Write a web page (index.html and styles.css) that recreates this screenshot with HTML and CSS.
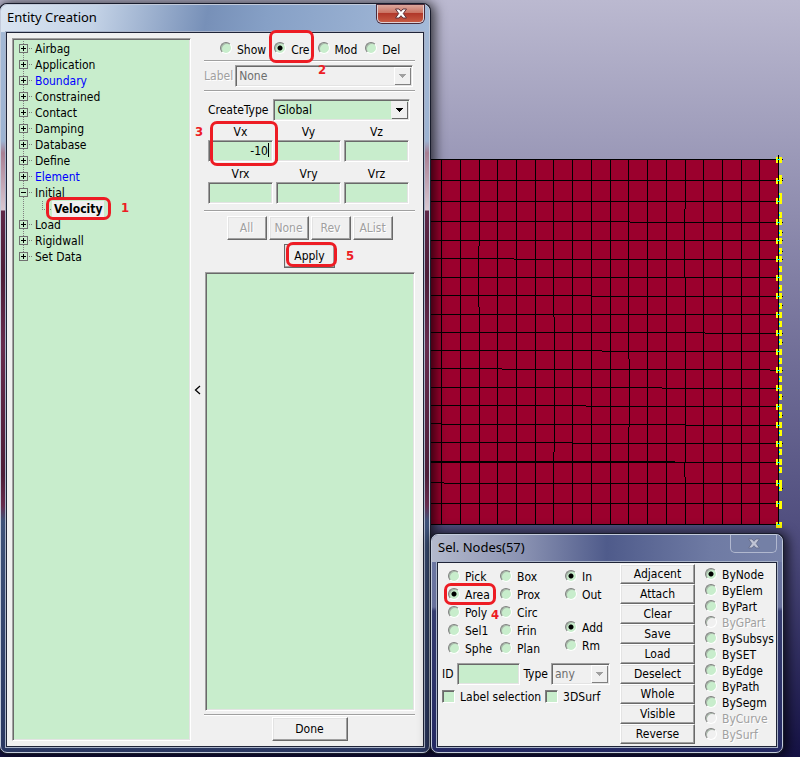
FILE: index.html
```html
<!DOCTYPE html>
<html lang="en">
<head>
<meta charset="utf-8">
<title>Entity Creation</title>
<link rel="stylesheet" href="styles.css">
</head>
<body>
<main class="desktop">
  <svg class="mesh" width="353" height="374" viewBox="431 155 353 374" shape-rendering="crispEdges" aria-hidden="true">
    <rect x="431" y="159" width="348" height="366" fill="#9b002d"/>
    <path fill="none" stroke="#000" stroke-width="1" d="M431 159.500H779M431 180.500H779M431 201.500H779M431 221.500H630M630 222.500H779M431 240.500H779M431 258.500H514M514 259.500H779M431 277.500H779M431 295.500H592M592 296.500H779M431 314.500H779M431 332.500H705M705 333.500H779M431 350.500H602M602 351.500H779M431 368.500H502M502 369.500H770M770 370.500H779M431 387.500H662M662 388.500H779M431 405.500H586M586 406.500H779M431 423.500H441M441 424.500H685M685 425.500H779M431 442.500H572M572 443.500H779M431 461.500H675M431 462.500H779M431 482.500H444M444 483.500H779M431 503.500H779M431 524.500H779"/>
    <path fill="none" stroke="#000" stroke-width="1" d="M441.500 159V525M460.500 159V525M479.500 159V246M478.500 246V307M479.500 307V525M497.500 159V525M516.500 159V525M535.500 159V525M553.500 159V317M554.500 317V452M553.500 452V525M572.500 159V525M591.500 159V525M610.500 159V525M628.500 159V359M629.500 359V427M628.500 427V525M647.500 159V525M666.500 159V525M685.500 159V209M684.500 209V277M685.500 277V462M684.500 462V477M685.500 477V525M703.500 159V525M722.500 159V525M741.500 159V525M759.500 159V525"/>
    <path fill="none" stroke="#ff0" stroke-width="3" d="M780.500 175v6M780.500 193v6M780.500 212v6M780.500 230v6M780.500 248v6M780.500 266v6M780.500 285v6M780.500 303v6M780.500 321v6M780.500 339v6M780.500 358v6M780.500 376v6M780.500 394v6M780.500 412v6M780.500 430v6M780.500 449v6M780.500 467v6M780.500 485v6M780.500 503v6"/>
    <path fill="none" stroke="#ff0" stroke-width="6" d="M779 157v6M779 178v6M779 198v6M779 219v6M779 238v6M779 256v6M779 275v6M779 293v6M779 312v6M779 330v6M779 349v6M779 367v6M779 385v6M779 404v6M779 422v6M779 441v6M779 459v6M779 480v6M779 501v6M779 522v6"/>
    <path fill="none" stroke="#000" stroke-width="1" d="M778.500 155V525M782 159.500h1M782 178.500h1M782 180.500h1M782 222.500h1M782 232.500h1M782 240.500h1M782 251.500h1M782 259.500h1M782 296.500h1M782 305.500h1M782 333.500h1M782 342.500h1M782 370.500h1M782 396.500h1M782 415.500h1M782 443.500h1M782 488.500h1"/>
    <path fill="none" stroke="#0ff" stroke-width="1" d="M779.500 195v3M779.500 214v2M779.500 232v2M779.500 250v2M779.500 268v2M779.500 287v2M779.500 305v2M779.500 323v2M779.500 341v2M779.500 360v2M779.500 378v2M779.500 396v2M779.500 414v2M779.500 432v2M779.500 451v2M779.500 469v2M779.500 487v2"/>
    <path fill="none" stroke="#0ff" stroke-width="1" d="M777 159.500h3M777 180.500h3M777 201.500h3M777 222.500h3M777 240.500h3M777 259.500h3M777 277.500h3M777 296.500h3M777 314.500h3M777 333.500h3M777 351.500h3M777 370.500h3M777 388.500h3M777 406.500h3M777 425.500h3M777 443.500h3M777 462.500h3M777 483.500h3M777 503.500h3M777 524.500h3"/>
  </svg>

  <section class="window entity" aria-labelledby="entity-title">
    <header class="titlebar">
      <h1 class="title" id="entity-title">Entity Creation</h1>
      <button class="close close-red" type="button" aria-label="Close">
        <svg width="14" height="11" viewBox="0 0 14 11"><path d="M1.500 1H5L7 3.300L9 1H12.500L9.300 5.500L12.500 10H9L7 7.700L5 10H1.500L4.700 5.500Z" fill="#fff" stroke="#5c3038" stroke-width="1"/></svg>
      </button>
    </header>
    <div class="client entity-client">
      <ul class="tree">
        <li class="node">Airbag</li>
        <li class="node">Application</li>
        <li class="node blue">Boundary</li>
        <li class="node">Constrained</li>
        <li class="node">Contact</li>
        <li class="node">Damping</li>
        <li class="node">Database</li>
        <li class="node">Define</li>
        <li class="node blue">Element</li>
        <li class="node open">Initial
          <ul class="subtree"><li class="leaf"><span class="selected">Velocity</span></li></ul>
        </li>
        <li class="node">Load</li>
        <li class="node">Rigidwall</li>
        <li class="node last">Set Data</li>
      </ul>
      <button class="collapse" type="button" aria-label="Collapse tree"><svg width="7" height="10" viewBox="0 0 7 10"><path d="M6 1L1.500 5L6 9" fill="none" stroke="#000" stroke-width="1.300"/></svg></button>
      <form class="panel">
        <div class="modes">
          <label class="opt"><input type="radio" name="mode">Show</label>
          <label class="opt"><input type="radio" name="mode" checked>Cre</label>
          <label class="opt"><input type="radio" name="mode">Mod</label>
          <label class="opt"><input type="radio" name="mode">Del</label>
        </div>
        <div class="rule"></div>
        <div class="label-row">
          <label class="off" for="label">Label</label>
          <select id="label" class="grow" disabled><option>None</option></select>
        </div>
        <div class="rule"></div>
        <div class="type-row">
          <label for="ctype">CreateType</label>
          <select id="ctype" class="grow"><option>Global</option></select>
        </div>
        <div class="vectors">
          <label class="vector">Vx<input type="text" value="-10"></label>
          <label class="vector">Vy<input type="text"></label>
          <label class="vector">Vz<input type="text"></label>
          <label class="vector">Vrx<input type="text"></label>
          <label class="vector">Vry<input type="text"></label>
          <label class="vector">Vrz<input type="text"></label>
        </div>
        <div class="rule"></div>
        <div class="picks">
          <button type="button" class="btn" disabled>All</button>
          <button type="button" class="btn" disabled>None</button>
          <button type="button" class="btn" disabled>Rev</button>
          <button type="button" class="btn" disabled>AList</button>
        </div>
        <button type="button" class="btn apply">Apply</button>
        <div class="list"></div>
        <div class="rule"></div>
        <button type="button" class="btn done">Done</button>
      </form>
    </div>
    <span class="caret"></span>
    <span class="ring ring-velocity"></span><b class="step step-1">1</b>
    <span class="ring ring-cre"></span><b class="step step-2">2</b>
    <span class="ring ring-vx"></span><b class="step step-3">3</b>
    <span class="ring ring-apply"></span><b class="step step-5">5</b>
  </section>

  <section class="window nodes" aria-labelledby="nodes-title">
    <header class="titlebar">
      <h2 class="title" id="nodes-title">Sel. Nodes(57)</h2>
      <button class="close close-dim" type="button" aria-label="Close">
        <svg width="14" height="11" viewBox="0 0 14 11"><path d="M1.500 1H5L7 3.300L9 1H12.500L9.300 5.500L12.500 10H9L7 7.700L5 10H1.500L4.700 5.500Z" fill="#c0c4d4" stroke="#69718f" stroke-width="1"/></svg>
      </button>
    </header>
    <form class="client nodes-client">
      <div class="pick-side">
        <div class="pick-cols">
          <div class="stack">
            <label class="opt"><input type="radio" name="shape">Pick</label>
            <label class="opt"><input type="radio" name="shape" checked>Area</label>
            <label class="opt"><input type="radio" name="shape">Poly</label>
            <label class="opt"><input type="radio" name="shape">Sel1</label>
            <label class="opt"><input type="radio" name="shape">Sphe</label>
          </div>
          <div class="stack">
            <label class="opt"><input type="radio" name="shape">Box</label>
            <label class="opt"><input type="radio" name="shape">Prox</label>
            <label class="opt"><input type="radio" name="shape">Circ</label>
            <label class="opt"><input type="radio" name="shape">Frin</label>
            <label class="opt"><input type="radio" name="shape">Plan</label>
          </div>
          <div class="groups">
            <div class="stack">
              <label class="opt"><input type="radio" name="side" checked>In</label>
              <label class="opt"><input type="radio" name="side">Out</label>
            </div>
            <div class="stack">
              <label class="opt"><input type="radio" name="op" checked>Add</label>
              <label class="opt"><input type="radio" name="op">Rm</label>
            </div>
          </div>
        </div>
        <div class="id-row">
          <label for="nid">ID</label><input id="nid" class="nid" type="text">
          <label for="ntype">Type</label><select id="ntype" class="ntype" disabled><option>any</option></select>
        </div>
        <div class="check-row">
          <label class="check"><input type="checkbox">Label selection</label>
          <label class="check"><input type="checkbox">3DSurf</label>
        </div>
      </div>
      <div class="actions">
        <button type="button" class="btn">Adjacent</button>
        <button type="button" class="btn">Attach</button>
        <button type="button" class="btn">Clear</button>
        <button type="button" class="btn">Save</button>
        <button type="button" class="btn">Load</button>
        <button type="button" class="btn">Deselect</button>
        <button type="button" class="btn">Whole</button>
        <button type="button" class="btn">Visible</button>
        <button type="button" class="btn">Reverse</button>
      </div>
      <div class="stack by">
        <label class="opt"><input type="radio" name="by" checked>ByNode</label>
        <label class="opt"><input type="radio" name="by">ByElem</label>
        <label class="opt"><input type="radio" name="by">ByPart</label>
        <label class="opt off"><input type="radio" name="by" disabled>ByGPart</label>
        <label class="opt"><input type="radio" name="by">BySubsys</label>
        <label class="opt"><input type="radio" name="by">BySET</label>
        <label class="opt"><input type="radio" name="by">ByEdge</label>
        <label class="opt"><input type="radio" name="by">ByPath</label>
        <label class="opt"><input type="radio" name="by">BySegm</label>
        <label class="opt off"><input type="radio" name="by" disabled>ByCurve</label>
        <label class="opt off"><input type="radio" name="by" disabled>BySurf</label>
      </div>
    </form>
    <span class="ring ring-area"></span><b class="step step-4">4</b>
  </section>
</main>
</body>
</html>
```
FILE: styles.css
```css
* { box-sizing: border-box; }

body {
  margin: 0;
  font: 12px/16px "DejaVu Sans Condensed", "DejaVu Sans", sans-serif;
  color: #000;
}

button, input, select { font: inherit; color: inherit; }
ul { list-style: none; margin: 0; padding: 0; }

.desktop {
  position: relative;
  min-height: 100vh;
  overflow: hidden;
  background: linear-gradient(#bbb9d0, #9f9dbb 18%, #74729a 45%, #4d4b7c 72%, #151245);
}

.mesh { position: absolute; left: 431px; top: 155px; }

/* Windows */
.window {
  position: absolute;
  display: flex;
  flex-direction: column;
  padding: 0 5px 5px;
  border: 1px solid #c3cbdb;
  border-radius: 7px;
  box-shadow: 0 0 0 1px #181c2c, 2px 1px 12px 3px rgba(0, 0, 0, .7);
}

.entity {
  left: 0;
  top: 4px;
  bottom: 4px;
  width: 430px;
  background: linear-gradient(#a5bad6 0, #9db3d2 136px, #a87f93 148px, #d8c8d2 205px, #5d2747 206px, #4d1d38 270px, #662b4d 340px, #4d1d38 470px, #662b4d 500px, #3e5279 516px, #2a3761 100%);
}

.entity .titlebar {
  background: linear-gradient(100deg, #dbe5f1 0, #c3d2e6 22%, #7790b8 48%, #86a0c6 62%, #a4bad9 100%);
}

.nodes {
  left: 431px;
  top: 534px;
  width: 352px;
  background: linear-gradient(#6f7ba6 0, #68719c 72px, #363d70 76px, #242963 100%);
}

.nodes .titlebar {
  background: linear-gradient(90deg, #b4b9cc 0, #8a92b2 26%, #4f5b8b 50%, #6f7ba4 80%, #7782a9 100%);
}

.titlebar {
  display: flex;
  justify-content: space-between;
  margin: 0 -5px;
  padding: 0 5px 0 6px;
  height: 27px;
  border-radius: 6px 6px 0 0;
}

.title {
  margin: 0;
  font: 13px/25px "Noto Sans", sans-serif;
}

.close {
  display: grid;
  place-items: center;
  width: 47px;
  height: 18px;
  padding: 0;
  border: 1px solid #e0d0d4;
  border-top: 0;
  border-radius: 0 0 5px 5px;
}

.close-red {
  background: linear-gradient(#dba79c, #cb7464 45%, #b1382a 50%, #c65a43);
  box-shadow: 0 0 0 1px #4b2b3a;
}

.close-dim { background: #7480a6; border-color: #b1b8cf; }

.client {
  flex: 1;
  display: flex;
  background: #f0f0f0;
  border: 1px solid #1f2438;
  box-shadow: 0 0 0 1px #a9b3c8;
}

/* Controls */
.btn {
  padding: 0;
  height: 24px;
  background: #f0f0f0;
  border: 1px solid;
  border-color: #fff #696969 #696969 #fff;
  box-shadow: inset -1px -1px #a0a0a0, inset 1px 1px #e3e3e3;
  text-align: center;
}

.off, .btn:disabled { color: #a0a0a0; text-shadow: 1px 1px #fff; }

input[type="text"], select, .list, .tree {
  margin: 0;
  background: #c8edcc;
  border: 1px solid;
  border-color: #a0a0a0 #fff #fff #a0a0a0;
  box-shadow: inset 1px 1px #696969, inset -1px -1px #e3e3e3;
}

input[type="text"] { min-width: 0; width: 100%; height: 22px; padding: 0 4px; text-align: right; }

select {
  appearance: none;
  height: 22px;
  padding: 0 20px 0 3px;
  border-radius: 0;
  opacity: 1;
  background:
    conic-gradient(from -45deg at 50% 0, transparent 0) 0 0 / 0 0 no-repeat,
    conic-gradient(from -45deg at 50% 100%, #000 90deg, transparent 0) 0 0 / 0 0 no-repeat,
    conic-gradient(from 135deg at 50% 0, transparent 0) 0 0 / 0 0 no-repeat,
    linear-gradient(#000, #000) right 6px top 8px / 7px 1px no-repeat,
    linear-gradient(#000, #000) right 7px top 9px / 5px 1px no-repeat,
    linear-gradient(#000, #000) right 8px top 10px / 3px 1px no-repeat,
    linear-gradient(#000, #000) right 9px top 11px / 1px 1px no-repeat,
    linear-gradient(#f0f0f0, #f0f0f0) right 2px top 1px / 16px 17px no-repeat,
    linear-gradient(#696969, #696969) right 1px top 2px / 16px 17px no-repeat,
    #c8edcc;
}

select:disabled {
  color: #6d6d6d;
  background:
    linear-gradient(#a0a0a0, #a0a0a0) right 6px top 8px / 7px 1px no-repeat,
    linear-gradient(#a0a0a0, #a0a0a0) right 7px top 9px / 5px 1px no-repeat,
    linear-gradient(#a0a0a0, #a0a0a0) right 8px top 10px / 3px 1px no-repeat,
    linear-gradient(#a0a0a0, #a0a0a0) right 9px top 11px / 1px 1px no-repeat,
    linear-gradient(#f0f0f0, #f0f0f0) right 2px top 2px / 15px 16px no-repeat,
    linear-gradient(#fff, #fff) right 2px top 1px / 16px 17px no-repeat,
    linear-gradient(#808080, #808080) right 1px top 2px / 16px 17px no-repeat,
    #f0f0f0;
}

input[type="radio"] {
  appearance: none;
  flex: none;
  width: 12px;
  height: 12px;
  margin: 0 5px 3px 0;
  border: 1px solid;
  border-color: #808080 #fff #fff #808080;
  border-radius: 50%;
  background: #c8edcc;
  box-shadow: inset 1px 1px #a8b8aa;
}

input[type="radio"]:checked { background: radial-gradient(circle, #000 2px, #c8edcc 3px); }
input[type="radio"]:disabled { background: #f0f0f0; }

input[type="checkbox"] {
  appearance: none;
  width: 13px;
  height: 13px;
  margin: 0 5px 2px 0;
  border: 1px solid;
  border-color: #808080 #fff #fff #808080;
  box-shadow: inset 1px 1px #696969;
  background: #c8edcc;
}

.opt, .check { display: flex; align-items: center; white-space: nowrap; }
.stack { display: flex; flex-direction: column; }
.stack .opt { height: 18px; }
.grow { flex: 1; min-width: 0; }
.rule { height: 2px; background: #a0a0a0; border-bottom: 1px solid #fff; }

/* Entity creation */
.entity-client { padding: 5px 8px 5px 5px; }

.tree { width: 179px; padding: 2px 6px; }

.node {
  padding-left: 16px;
  background:
    linear-gradient(#000, #000) 2px 7px / 5px 1px no-repeat,
    linear-gradient(#000, #000) 4px 5px / 1px 5px no-repeat,
    linear-gradient(#c8edcc, #c8edcc) 1px 4px / 7px 7px no-repeat,
    linear-gradient(#707070, #707070) 0 3px / 9px 9px no-repeat,
    repeating-linear-gradient(90deg, #808080 0 1px, transparent 1px 2px) 10px 7px / 4px 1px no-repeat,
    repeating-linear-gradient(#808080 0 1px, transparent 1px 2px) 4px 0 / 1px 100% no-repeat;
}

.node.open {
  background:
    linear-gradient(#000, #000) 2px 7px / 5px 1px no-repeat,
    linear-gradient(#c8edcc, #c8edcc) 1px 4px / 7px 7px no-repeat,
    linear-gradient(#707070, #707070) 0 3px / 9px 9px no-repeat,
    repeating-linear-gradient(90deg, #808080 0 1px, transparent 1px 2px) 10px 7px / 4px 1px no-repeat,
    repeating-linear-gradient(#808080 0 1px, transparent 1px 2px) 4px 0 / 1px 100% no-repeat;
}

.node.last { background-size: 5px 1px, 1px 5px, 7px 7px, 9px 9px, 4px 1px, 1px 8px; }
.blue { color: #00f; }

.leaf {
  padding-left: 17px;
  font-weight: bold;
  background:
    repeating-linear-gradient(90deg, #808080 0 1px, transparent 1px 2px) 7px 8px / 10px 1px no-repeat,
    repeating-linear-gradient(#808080 0 1px, transparent 1px 2px) 7px 0 / 1px 8px no-repeat;
}

.selected { display: inline-block; padding: 0 2px; background: #f0f0f0; }

.collapse { width: 13px; padding: 0; border: 0; background: none; display: grid; place-items: center; }

.panel { flex: 1; min-width: 0; display: flex; flex-direction: column; }
.modes { display: flex; gap: 8px; height: 22px; padding: 1px 16px 0; }
.label-row, .type-row { display: flex; align-items: center; }
.label-row { gap: 2px; height: 28px; padding: 0 2px 0 0; }
.type-row { gap: 5px; height: 32px; padding: 4px 5px 0 4px; }

.vectors {
  display: grid;
  grid-template-columns: repeat(3, 1fr);
  gap: 4px 3px;
  padding: 0 6px 6px 4px;
}

.vector { display: block; text-align: center; }
.vector input { display: block; }

.picks { display: flex; justify-content: center; gap: 2px; margin: 4px 0; }
.picks .btn { width: 40px; }
.apply { align-self: center; width: 51px; border-color: #696969; }
.list { flex: 1; margin: 4px 0 3px 1px; }
.done { align-self: center; width: 76px; margin-top: 1px; }

/* Node selection */
.nodes-client { gap: 10px; padding: 1px 4px 2px 4px; }
.pick-side { flex: 1; min-width: 0; }
.pick-cols { display: grid; grid-template-columns: 52px 65px 1fr; padding: 4px 0 0 6px; }
.groups { display: flex; flex-direction: column; gap: 15px; }
.id-row { display: flex; align-items: center; gap: 3px; margin-top: 5px; height: 22px; }
.nid { flex: 1; }
.ntype { width: 59px; }
.check-row { display: flex; gap: 4px; margin-top: 4px; }
.actions { display: flex; flex-direction: column; width: 75px; }
.actions .btn { height: 20px; }
.by { width: 67px; padding-top: 3px; }
.by .opt { height: 16px; }

/* Annotations over the windows */
.ring { position: absolute; border: 3px solid #ed1c24; border-radius: 7px; pointer-events: none; }
.step { position: absolute; color: #ed1c24; font: bold 13px/16px "DejaVu Sans Condensed", "DejaVu Sans", sans-serif; }
.ring-velocity { left: 45px; top: 192px; width: 65px; height: 23px; }
.ring-cre { left: 268px; top: 25px; width: 45px; height: 33px; }
.ring-vx { left: 209px; top: 116px; width: 68px; height: 45px; }
.ring-apply { left: 285px; top: 237px; width: 51px; height: 25px; }
.ring-area { left: 12px; top: 48px; width: 52px; height: 22px; }
.step-1 { left: 120px; top: 195px; }
.step-2 { left: 317px; top: 57px; }
.step-3 { left: 194px; top: 119px; }
.step-5 { left: 345px; top: 243px; }
.step-4 { left: 59px; top: 72px; }
.caret { position: absolute; left: 267px; top: 138px; width: 1px; height: 14px; background: #000; }
```
